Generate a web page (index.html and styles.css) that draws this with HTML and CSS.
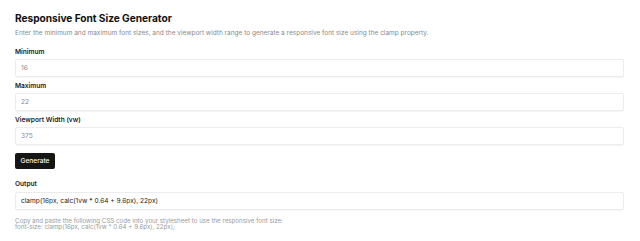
FILE: index.html
```html
<!DOCTYPE html>
<html lang="en">
<head>
<meta charset="utf-8">
<title>Responsive Font Size Generator</title>
<link rel="stylesheet" href="styles.css">
</head>
<body>
<main class="page">
  <h1 class="title">Responsive Font Size Generator</h1>
  <p class="intro">Enter the minimum and maximum font sizes, and the viewport width range to generate a responsive font size using the clamp property.</p>
  <div class="field">
    <label class="label" for="min">Minimum</label>
    <input class="input" id="min" type="text" value="16">
  </div>
  <div class="field">
    <label class="label" for="max">Maximum</label>
    <input class="input" id="max" type="text" value="22">
  </div>
  <div class="field">
    <label class="label" for="vw">Viewport Width (vw)</label>
    <input class="input" id="vw" type="text" value="375">
  </div>
  <button class="btn" type="button">Generate</button>
  <div class="field output-field">
    <label class="label" for="out">Output</label>
    <input class="input output" id="out" type="text" value="clamp(16px, calc(1vw * 0.64 + 9.6px), 22px)" readonly>
  </div>
  <p class="help"><span class="help-line">Copy and paste the following CSS code into your stylesheet to use the responsive font size:</span><span class="help-line">font-size: clamp(16px, calc(1vw * 0.64 + 9.6px), 22px);</span></p>
</main>
</body>
</html>
```
FILE: styles.css
```css
* { box-sizing: border-box; }
html, body { margin: 0; padding: 0; background: #ffffff; }
body {
  font-family: Inter, "Noto Sans", "Liberation Sans", sans-serif;
  color: #111111;
}
.page {
  padding: 11px 16px 0 15px;
  display: flex;
  flex-direction: column;
}
.title {
  margin: 0;
  font-size: 10.2px;
  line-height: 14px;
  font-weight: 700;
  letter-spacing: -0.005em;
  color: #111111;
}
.intro {
  margin: 3.5px 0 0;
  font-size: 6.5px;
  line-height: 9px;
  color: #8a8a8a;
}
.field {
  display: flex;
  flex-direction: column;
  gap: 2.5px;
  margin-top: 10px;
}
.field + .field { margin-top: 4.5px; }
.label {
  font-size: 6.6px;
  line-height: 9px;
  font-weight: 600;
  color: #1a1a1a;
}
.input {
  height: 18px;
  width: 100%;
  border: 1px solid #ececec;
  border-radius: 2px;
  box-shadow: 0 1px 1px rgba(0,0,0,0.04);
  padding: 0 5px;
  font-family: inherit;
  font-size: 6.6px;
  color: #8a8a8a;
  background: #fff;
  outline: none;
}
.output { color: #222222; font-size: 6.6px; }
.btn {
  align-self: flex-start;
  margin-top: 8px;
  height: 16px;
  width: 40px;
  padding: 0;
  border: none;
  border-radius: 2px;
  background: #161616;
  color: #f5f5f5;
  font-family: inherit;
  font-size: 6.6px;
  font-weight: 500;
}
.output-field { margin-top: 11px; }
.help {
  margin: 8px 0 0;
  display: flex;
  flex-direction: column;
  gap: 0.5px;
  font-size: 6.2px;
  color: #9a9a9a;
}
.help-line {
  display: block;
  line-height: 6px;
  white-space: nowrap;
}
```
